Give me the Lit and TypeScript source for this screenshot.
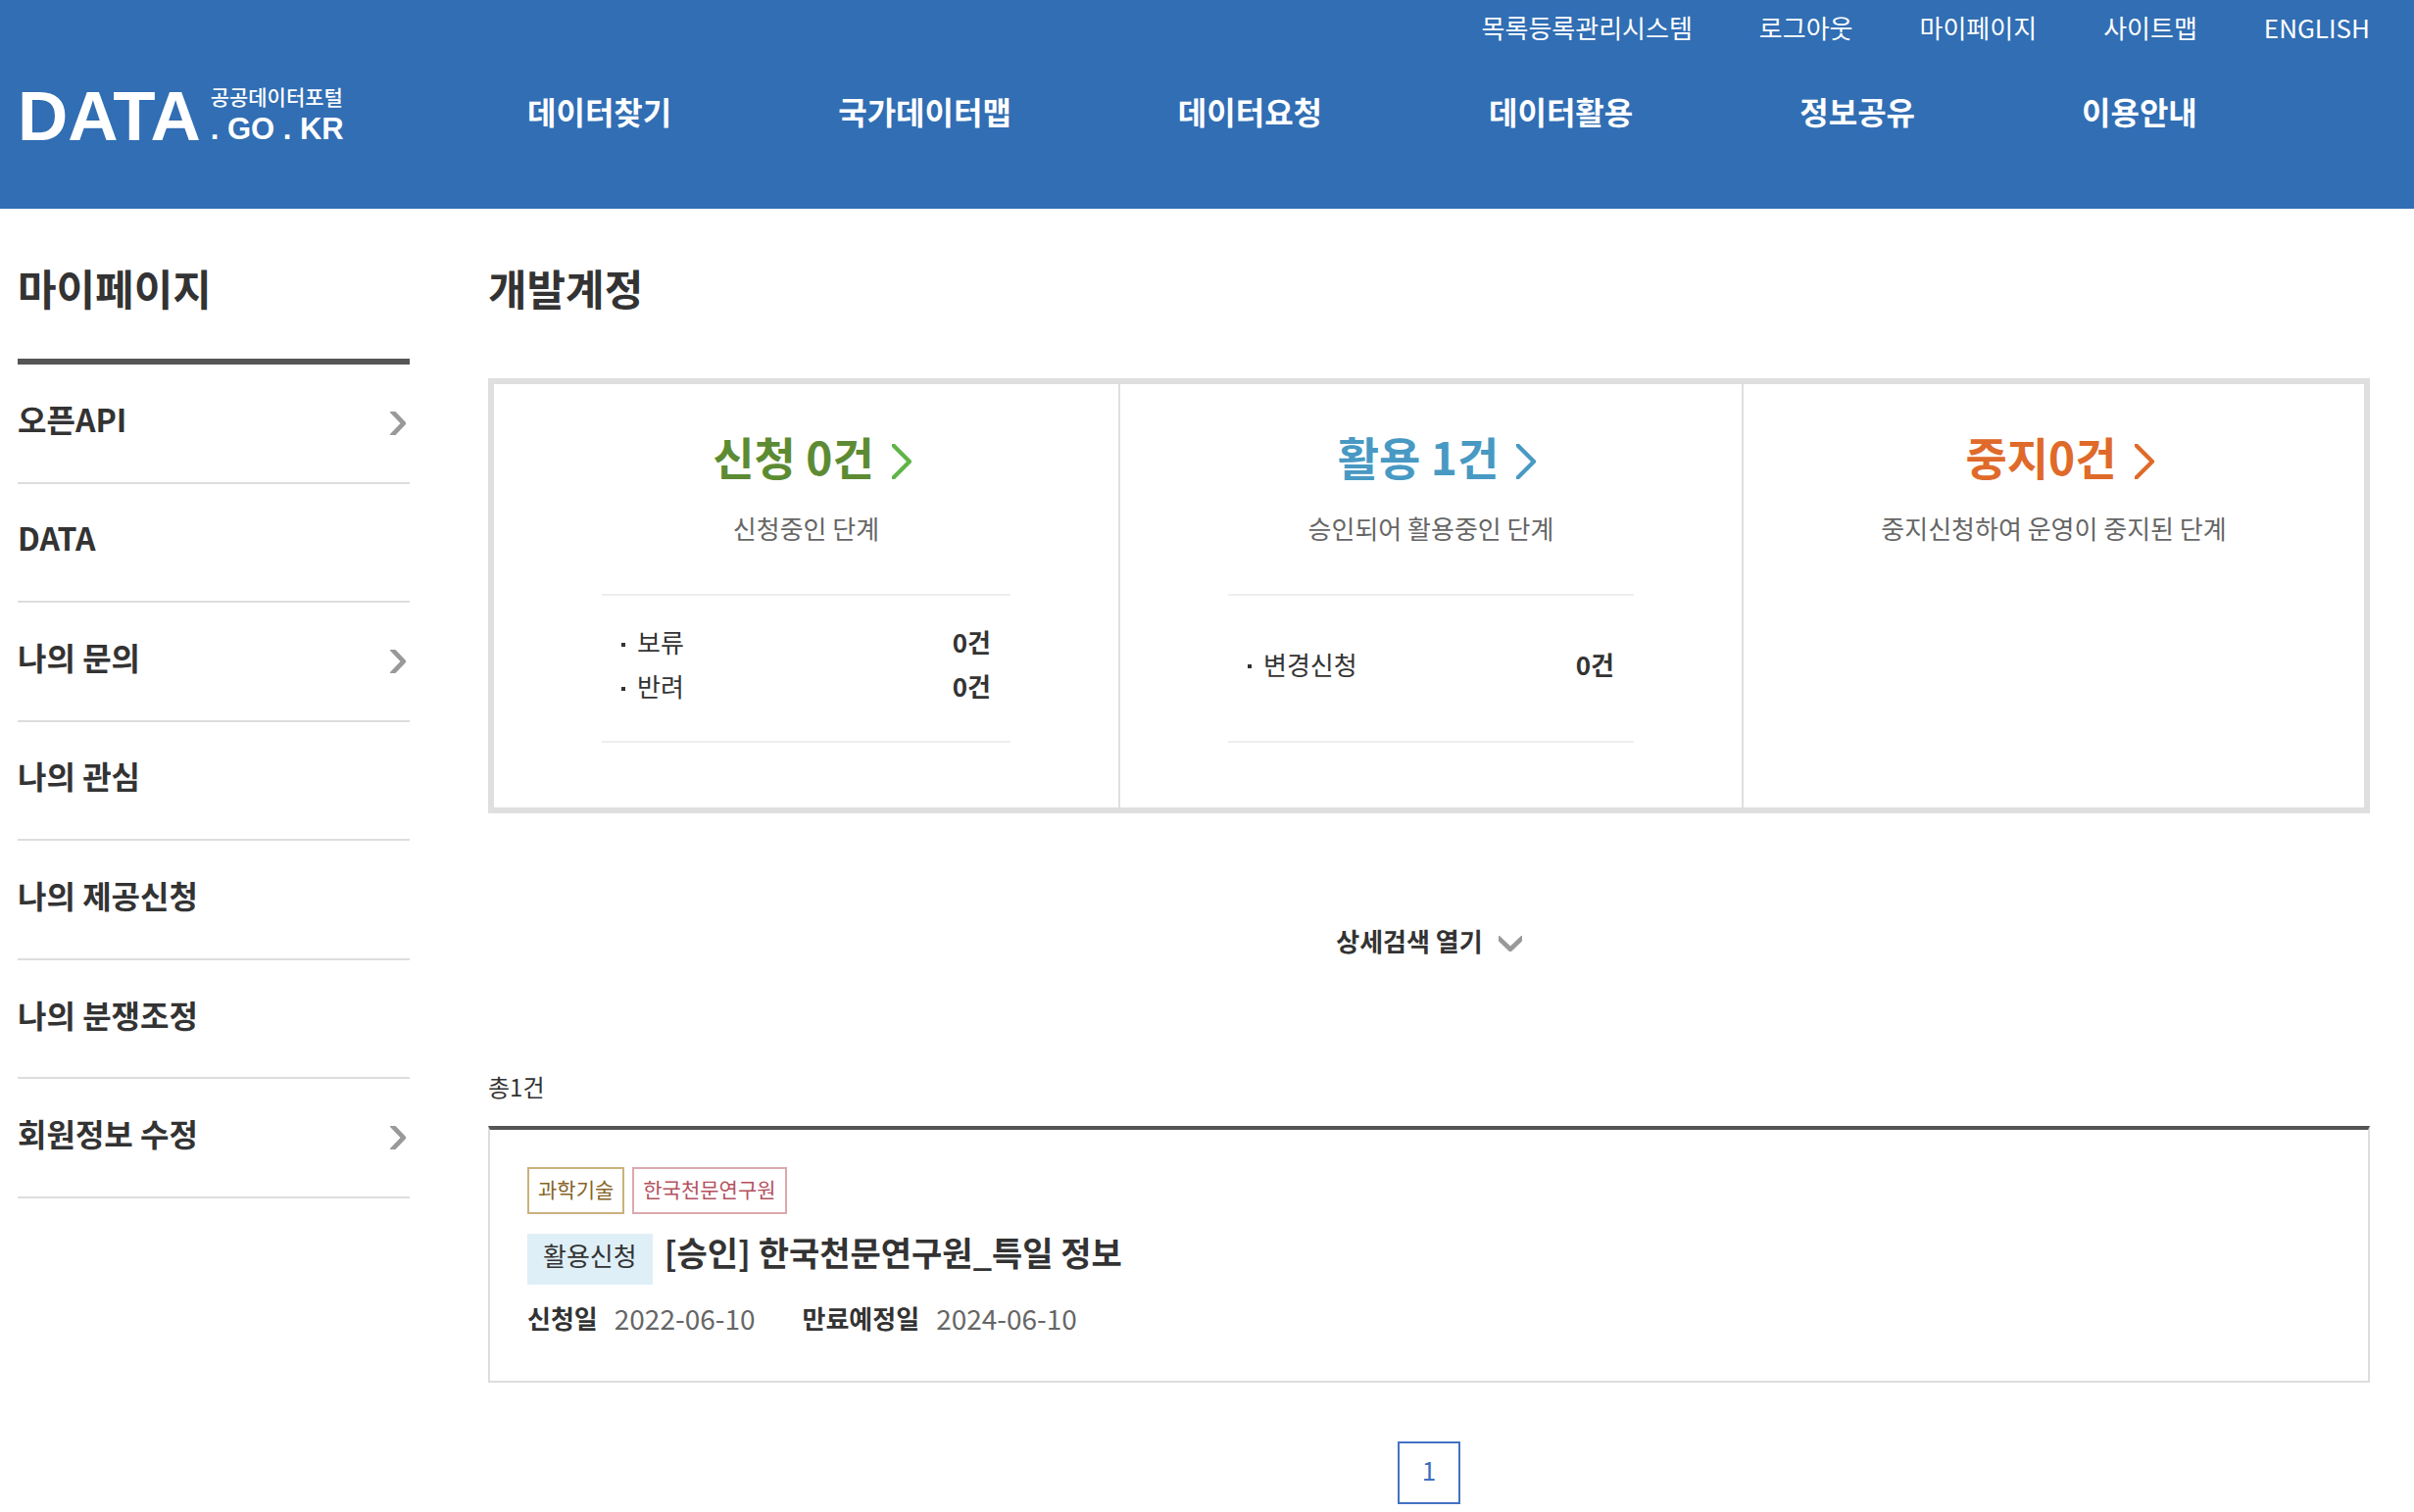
import { LitElement, css, html, svg, nothing } from "lit";
import { customElement, property } from "lit/decorators.js";

interface MenuItem {
  label: string;
  expandable?: boolean;
}

interface Stage {
  tone: "green" | "blue" | "orange";
  title: string;
  note: string;
  rows: { label: string; count: string }[];
}

const UTIL_LINKS = ["목록등록관리시스템", "로그아웃", "마이페이지", "사이트맵", "ENGLISH"];

const NAV_LINKS = ["데이터찾기", "국가데이터맵", "데이터요청", "데이터활용", "정보공유", "이용안내"];

const SIDE_MENU: MenuItem[] = [
  { label: "오픈API", expandable: true },
  { label: "DATA" },
  { label: "나의 문의", expandable: true },
  { label: "나의 관심" },
  { label: "나의 제공신청" },
  { label: "나의 분쟁조정" },
  { label: "회원정보 수정", expandable: true },
];

const STAGES: Stage[] = [
  {
    tone: "green",
    title: "신청 0건",
    note: "신청중인 단계",
    rows: [
      { label: "보류", count: "0건" },
      { label: "반려", count: "0건" },
    ],
  },
  {
    tone: "blue",
    title: "활용 1건",
    note: "승인되어 활용중인 단계",
    rows: [{ label: "변경신청", count: "0건" }],
  },
  { tone: "orange", title: "중지0건", note: "중지신청하여 운영이 중지된 단계", rows: [] },
];

const base = css`
  :host {
    display: block;
    font-family: "Noto Sans CJK KR", "Noto Sans", sans-serif;
    color: #333;
  }
  * {
    box-sizing: border-box;
  }
  a {
    color: inherit;
    text-decoration: none;
  }
  ul,
  dl,
  dd,
  h1,
  h2,
  h3,
  p {
    margin: 0;
    padding: 0;
    list-style: none;
  }
`;

@customElement("site-header")
export class SiteHeader extends LitElement {
  static styles = [
    base,
    css`
      .header {
        background: #316eb4;
        color: #fff;
        padding: 8px 45px 35px 18px;
      }
      .util {
        display: flex;
        justify-content: flex-end;
        gap: 68px;
        font-size: 26px;
        line-height: 40px;
      }
      .bar {
        display: grid;
        grid-template-columns: 400px 1fr;
        column-gap: 80px;
        align-items: center;
        min-height: 130px;
      }
      .logo {
        display: flex;
        align-items: flex-end;
        gap: 10px;
        padding-top: 6px;
        font-family: "Liberation Sans", sans-serif;
        font-weight: 700;
        white-space: nowrap;
      }
      .logo-main {
        font-size: 71px;
        line-height: 54px;
      }
      .logo-side {
        display: flex;
        flex-direction: column;
        gap: 8px;
      }
      .logo-ko {
        font-family: "Noto Sans CJK KR", sans-serif;
        font-size: 21px;
        font-weight: 500;
        line-height: 24px;
      }
      .logo-domain {
        font-size: 31px;
        line-height: 28px;
      }
      .nav {
        display: flex;
        gap: 170px;
        padding-left: 40px;
        font-size: 32px;
        font-weight: 700;
        line-height: 48px;
        white-space: nowrap;
      }
    `,
  ];

  render() {
    return html`
      <header class="header">
        <nav class="util">${UTIL_LINKS.map((label) => html`<a href="#">${label}</a>`)}</nav>
        <div class="bar">
          <a class="logo" href="#">
            <span class="logo-main">DATA</span>
            <span class="logo-side">
              <span class="logo-ko">공공데이터포털</span>
              <span class="logo-domain">. GO . KR</span>
            </span>
          </a>
          <nav class="nav">${NAV_LINKS.map((label) => html`<a href="#">${label}</a>`)}</nav>
        </div>
      </header>
    `;
  }
}

@customElement("side-menu")
export class SideMenu extends LitElement {
  static styles = [
    base,
    css`
      .title {
        padding: 50px 0 43px;
        font-size: 43px;
        font-weight: 700;
        line-height: 60px;
      }
      .list {
        display: grid;
        grid-auto-rows: 1fr;
        min-height: 857px;
        border-top: 6px solid #555;
      }
      .item {
        display: flex;
        border-bottom: 2px solid #ddd;
      }
      .link {
        flex: 1;
        display: flex;
        align-items: center;
        justify-content: space-between;
        padding-right: 4px;
        font-size: 32px;
        font-weight: 700;
      }
      .label {
        line-height: 48px;
        padding-bottom: 10px;
      }
    `,
  ];

  render() {
    return html`
      <h2 class="title">마이페이지</h2>
      <ul class="list">
        ${SIDE_MENU.map(
          (item) => html`
            <li class="item">
              <a class="link" href="#">
                <span class="label">${item.label}</span>
                ${item.expandable
                  ? html`<svg width="16" height="24" viewBox="0 0 16 24" aria-hidden="true">
                      ${svg`<path d="M0 0H5.500L16 11V13L5.500 24H0V23L10.500 12L0 1Z" fill="#999" />`}
                    </svg>`
                  : nothing}
              </a>
            </li>
          `,
        )}
      </ul>
    `;
  }
}

@customElement("stage-card")
export class StageCard extends LitElement {
  @property({ attribute: false }) stage!: Stage;

  static styles = [
    base,
    css`
      .card {
        display: flex;
        flex-direction: column;
        padding: 43px 110px 66px;
      }
      .title {
        display: flex;
        align-items: center;
        justify-content: center;
        gap: 18px;
        padding-left: 12px;
        font-size: 46px;
        font-weight: 700;
        line-height: 60px;
        white-space: nowrap;
      }
      .arrow {
        margin-top: 12px;
      }
      .green {
        color: #5d8b33;
      }
      .green .arrow {
        color: #5fb548;
      }
      .blue {
        color: #4899c3;
      }
      .orange {
        color: #df6a2a;
      }
      .note {
        margin-top: 24px;
        color: #666;
        font-size: 26px;
        line-height: 40px;
        text-align: center;
        white-space: nowrap;
      }
      .rows {
        display: flex;
        flex-direction: column;
        justify-content: center;
        min-height: 152px;
        margin-top: 47px;
        padding: 0 20px 10px;
        border-top: 2px solid #eee;
        border-bottom: 2px solid #eee;
        font-size: 26px;
        line-height: 45px;
      }
      .row {
        display: flex;
        align-items: center;
      }
      .row::before {
        content: "";
        width: 4px;
        height: 4px;
        margin: 6px 12px 0 0;
        background: #333;
      }
      .count {
        margin-left: auto;
        font-weight: 700;
      }
    `,
  ];

  render() {
    const { tone, title, note, rows } = this.stage;
    return html`
      <div class="card">
        <h3>
          <a class="title ${tone}" href="#">
            ${title}
            <svg class="arrow" width="20" height="36" viewBox="0 0 20 36" aria-hidden="true">
              ${svg`<path d="M0 0H3L20 17V19L3 36H0V33L15 18L0 3Z" fill="currentColor" />`}
            </svg>
          </a>
        </h3>
        <p class="note">${note}</p>
        ${rows.length
          ? html`<ul class="rows">
              ${rows.map(
                (row) => html`<li class="row">
                  <span>${row.label}</span><span class="count">${row.count}</span>
                </li>`,
              )}
            </ul>`
          : nothing}
      </div>
    `;
  }
}

@customElement("app-root")
export class AppRoot extends LitElement {
  static styles = [
    base,
    css`
      :host {
        background: #fff;
      }
      .page {
        display: grid;
        grid-template-columns: 400px 1fr;
        column-gap: 80px;
        padding: 0 45px 8px 18px;
      }
      .title {
        padding: 50px 0 63px;
        font-size: 43px;
        font-weight: 700;
        line-height: 60px;
      }
      .stages {
        display: grid;
        grid-template-columns: 639fr 636fr 633fr;
        border: 6px solid #dfdfdf;
      }
      .stage:not(:last-child) {
        border-right: 2px solid #dfdfdf;
      }
      .toggle {
        display: flex;
        align-items: center;
        gap: 16px;
        margin: 110px auto 109px;
        padding: 0;
        border: 0;
        background: none;
        color: inherit;
        font: inherit;
        font-size: 26px;
        font-weight: 700;
        line-height: 40px;
        cursor: pointer;
      }
      .toggle-icon {
        margin-top: 6px;
      }
      .total {
        margin-bottom: 20px;
        font-size: 24px;
        line-height: 40px;
      }
      .result {
        padding: 38px 38px 44px;
        border: 2px solid #ddd;
        border-top: 4px solid #555;
      }
      .tags {
        display: flex;
        gap: 8px;
      }
      .tag {
        padding: 0 9px 4px;
        border: 2px solid;
        font-size: 21px;
        line-height: 40px;
      }
      .tag-field {
        border-color: #c9b27c;
        color: #866428;
      }
      .tag-org {
        border-color: #dca8af;
        color: #b4525f;
      }
      .heading {
        display: flex;
        gap: 12px;
        margin-top: 20px;
      }
      .badge {
        padding: 0 16px 8px;
        background: #dfeff8;
        font-size: 26px;
        line-height: 44px;
      }
      .name {
        font-size: 34px;
        font-weight: 700;
        line-height: 38px;
      }
      .dates {
        display: flex;
        gap: 48px;
        margin-top: 14px;
        font-size: 26px;
        line-height: 40px;
      }
      .date {
        display: flex;
        gap: 17px;
      }
      .date-label {
        font-weight: 700;
      }
      .date-value {
        color: #666;
        font-size: 28px;
      }
      .pages {
        display: flex;
        justify-content: center;
        margin-top: 60px;
      }
      .current {
        width: 64px;
        height: 64px;
        border: 2px solid #4472c4;
        color: #3f6fc0;
        font-size: 26px;
        line-height: 54px;
        text-align: center;
      }
    `,
  ];

  render() {
    return html`
      <site-header></site-header>
      <div class="page">
        <side-menu></side-menu>
        <main>
          <h1 class="title">개발계정</h1>
          <section class="stages">
            ${STAGES.map((stage) => html`<stage-card class="stage" .stage=${stage}></stage-card>`)}
          </section>
          <button class="toggle" type="button">
            상세검색 열기
            <svg class="toggle-icon" width="24" height="16" viewBox="0 0 24 16" aria-hidden="true">
              ${svg`<path d="M0 0H1L12 10.500L23 0H24V5.500L13 16H11L0 5.500Z" fill="#999" />`}
            </svg>
          </button>
          <p class="total">총1건</p>
          <article class="result">
            <div class="tags">
              <span class="tag tag-field">과학기술</span>
              <span class="tag tag-org">한국천문연구원</span>
            </div>
            <div class="heading">
              <span class="badge">활용신청</span>
              <h2 class="name"><a href="#">[승인] 한국천문연구원_특일 정보</a></h2>
            </div>
            <dl class="dates">
              <div class="date">
                <dt class="date-label">신청일</dt>
                <dd class="date-value">2022-06-10</dd>
              </div>
              <div class="date">
                <dt class="date-label">만료예정일</dt>
                <dd class="date-value">2024-06-10</dd>
              </div>
            </dl>
          </article>
          <nav class="pages"><a class="current" href="#" aria-current="page">1</a></nav>
        </main>
      </div>
    `;
  }
}
